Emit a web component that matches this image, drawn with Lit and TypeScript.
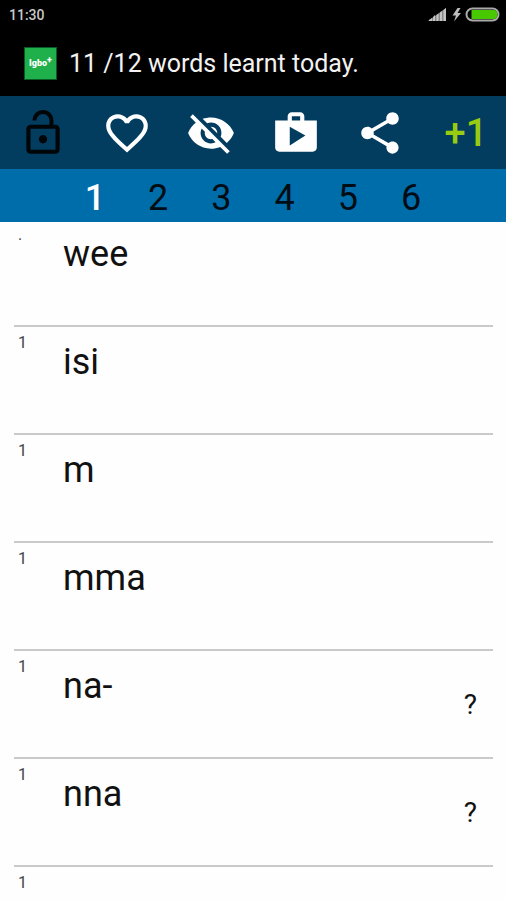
import { LitElement, html, css, svg } from "lit";
import { customElement, state } from "lit/decorators.js";
import { classMap } from "lit/directives/class-map.js";

interface Word {
  mark: string;
  text: string;
  hint?: boolean;
}

const WORDS: Word[] = [
  { mark: ".", text: "wee" },
  { mark: "1", text: "isi" },
  { mark: "1", text: "m" },
  { mark: "1", text: "mma" },
  { mark: "1", text: "na-", hint: true },
  { mark: "1", text: "nna", hint: true },
  { mark: "1", text: "" },
];

const ACTIONS = [
  {
    label: "Unlock",
    dark: true,
    path: "M12 17c1.1 0 2-.9 2-2s-.9-2-2-2-2 .9-2 2 .9 2 2 2zm6-9h-1V6c0-2.76-2.24-5-5-5S7 3.24 7 6h1.9c0-1.71 1.39-3.1 3.1-3.1s3.1 1.39 3.1 3.1v2H6c-1.1 0-2 .9-2 2v10c0 1.1.9 2 2 2h12c1.1 0 2-.9 2-2V10c0-1.1-.9-2-2-2zm0 12H6V10h12v10z",
  },
  {
    label: "Favourites",
    dark: false,
    path: "M16.5 3c-1.74 0-3.41.81-4.5 2.09C10.91 3.81 9.24 3 7.5 3 4.42 3 2 5.42 2 8.5c0 3.78 3.4 6.86 8.55 11.54L12 21.35l1.45-1.32C18.6 15.36 22 12.28 22 8.5 22 5.42 19.58 3 16.5 3zm-4.4 15.55l-.1.1-.1-.1C7.14 14.24 4 11.39 4 8.5 4 6.5 5.5 5 7.5 5c1.54 0 3.04.99 3.57 2.36h1.87C13.46 5.99 14.96 5 16.5 5c2 0 3.5 1.5 3.5 3.5 0 2.89-3.14 5.74-7.9 10.05z",
  },
  {
    label: "Hide translations",
    dark: false,
    path: "M12 7c2.76 0 5 2.24 5 5 0 .65-.13 1.26-.36 1.83l2.92 2.92c1.51-1.26 2.7-2.89 3.43-4.75-1.73-4.39-6-7.5-11-7.5-1.4 0-2.74.25-3.98.7l2.16 2.16C10.74 7.13 11.35 7 12 7zM2 4.27l2.28 2.28.46.46C3.08 8.3 1.78 10.02 1 12c1.73 4.39 6 7.5 11 7.5 1.55 0 3.03-.3 4.38-.84l.42.42L19.73 22 21 20.73 3.27 3 2 4.27zM7.53 9.8l1.55 1.55c-.05.21-.08.43-.08.65 0 1.66 1.34 3 3 3 .22 0 .44-.03.65-.08l1.55 1.55c-.67.33-1.41.53-2.2.53-2.76 0-5-2.24-5-5 0-.79.2-1.53.53-2.2zm4.31-.78l3.15 3.15.02-.16c0-1.66-1.34-3-3-3l-.17.01z",
  },
  {
    label: "Store",
    dark: false,
    path: "M16 6V4c0-1.11-.89-2-2-2h-4c-1.11 0-2 .89-2 2v2H2v13c0 1.11.89 2 2 2h16c1.11 0 2-.89 2-2V6h-6zm-6-2h4v2h-4V4zM9 18V9l7.5 4.2L9 18z",
  },
  {
    label: "Share",
    dark: false,
    path: "M18 16.08c-.76 0-1.44.3-1.96.77L8.91 12.7c.05-.23.09-.46.09-.7s-.04-.47-.09-.7l7.05-4.11c.54.5 1.25.81 2.04.81 1.66 0 3-1.34 3-3s-1.34-3-3-3-3 1.34-3 3c0 .24.04.47.09.7L8.04 9.81C7.5 9.31 6.79 9 6 9c-1.66 0-3 1.34-3 3s1.34 3 3 3c.79 0 1.5-.31 2.04-.81l7.12 4.16c-.05.21-.08.43-.08.65 0 1.61 1.31 2.92 2.92 2.92s2.92-1.31 2.92-2.92-1.31-2.92-2.92-2.92z",
  },
];

@customElement("app-root")
export class AppRoot extends LitElement {
  @state() private page = 1;

  static styles = css`
    :host {
      display: flex;
      flex-direction: column;
      height: 100vh;
      overflow: hidden;
      background: #fefefe;
      color: #111;
      font-family: Roboto, "Liberation Sans", sans-serif;
    }
    button {
      margin: 0;
      padding: 0;
      border: 0;
      background: none;
      font: inherit;
      color: inherit;
      cursor: pointer;
    }
    svg {
      display: block;
    }
    .system {
      flex: none;
      background: #000;
      color: #f2f2f2;
    }
    .status {
      display: flex;
      align-items: center;
      justify-content: space-between;
      height: 30px;
      padding: 0 6px 0 9px;
    }
    .time {
      font-size: 14px;
      font-weight: 500;
      color: #c8c8c8;
    }
    .notice {
      display: flex;
      align-items: center;
      gap: 12px;
      height: 66px;
      padding: 0 24px;
    }
    .badge {
      display: flex;
      align-items: center;
      justify-content: center;
      box-sizing: border-box;
      width: 33px;
      height: 33px;
      border: 1px solid #0b5a26;
      background: #20b04b;
      color: #fff;
      font-size: 9px;
      font-weight: 900;
    }
    .badge sup {
      font-size: 9px;
      line-height: 1;
      padding-bottom: 6px;
    }
    .message {
      margin: 0;
      font-size: 25px;
      font-weight: 400;
      white-space: nowrap;
    }
    .toolbar {
      flex: none;
      display: flex;
      height: 73px;
      padding-left: 1px;
      background: #023d60;
    }
    .action {
      flex: 1 1 0;
      display: flex;
      align-items: center;
      justify-content: center;
      color: #fff;
    }
    .action.dark {
      color: #000508;
    }
    .action.plus {
      color: #9c1;
      font-size: 38px;
      font-weight: 500;
    }
    .action.plus span {
      padding-left: 4px;
    }
    .icon {
      width: 50px;
      height: 50px;
      fill: currentColor;
    }
    .pages {
      flex: none;
      display: flex;
      height: 53px;
      padding: 0 12.5%;
      background: #006dab;
    }
    .page {
      flex: 1;
      padding-top: 4px;
      font-size: 36px;
      color: #000c14;
    }
    .page.current {
      color: #fff;
      font-weight: 500;
    }
    .words {
      flex: 1;
      min-height: 0;
      margin: -3px 0 0;
      padding: 0 13px 0 14px;
      overflow-y: auto;
      scrollbar-width: none;
      list-style: none;
    }
    .word {
      display: flex;
      box-sizing: border-box;
      height: 108px;
      border-bottom: 2px solid #cacaca;
    }
    .mark {
      width: 49px;
      box-sizing: border-box;
      padding: 6px 0 0 4px;
      font-size: 16px;
      line-height: 20px;
      color: #444;
    }
    .text {
      flex: 1;
      padding-top: 14px;
      font-size: 36px;
      line-height: 42px;
    }
    .hint {
      align-self: flex-end;
      padding: 0 16px 34px;
      font-size: 28px;
      line-height: 36px;
    }
  `;

  render() {
    return html`
      <header class="system">
        <div class="status">
          <span class="time">11:30</span>
          <svg width="72" height="16" viewBox="0 0 72 16" role="img" aria-label="Signal, charging">
            <path d="M0 14L18 1v13z" fill="#888" />
            <path d="M1 14v-1l3-2v3zM5 14v-4l2-2v6zM8.500 14V8l2-1.500V14zM12 14V5.500l2-1.500v10zM15.500 14V3L18 1v13z" fill="#c4c4c4" />
            <path d="M29.500 1l-5 7.500h3.500l-2 6 7-8.500h-3.500l3-5z" fill="#bdbdbd" />
            <rect x="38.500" y="1.500" width="32" height="12" rx="6" fill="#000" stroke="#aaa" stroke-width="2" />
            <path d="M43.500 3H65.500a4 4.500 0 0 1 0 9H43.500z" fill="#48c800" />
          </svg>
        </div>
        <div class="notice">
          <span class="badge">Igbo<sup>+</sup></span>
          <h1 class="message">11 /12 words learnt today.</h1>
        </div>
      </header>
      <div class="toolbar" role="toolbar" aria-label="Actions">
        ${ACTIONS.map(
          (a) => html`
            <button class=${classMap({ action: true, dark: a.dark })} aria-label=${a.label}>
              <svg class="icon" viewBox="0 0 24 24" aria-hidden="true">${svg`<path d=${a.path} />`}</svg>
            </button>
          `
        )}
        <button class="action plus"><span>+1</span></button>
      </div>
      <nav class="pages" aria-label="Pages">
        ${[1, 2, 3, 4, 5, 6].map(
          (n) => html`<button
            class=${classMap({ page: true, current: n === this.page })}
            @click=${() => (this.page = n)}
          >${n}</button>`
        )}
      </nav>
      <ul class="words">
        ${WORDS.map(
          (w) => html`
            <li class="word">
              <span class="mark">${w.mark}</span>
              <span class="text">${w.text}</span>
              ${w.hint ? html`<button class="hint">?</button>` : ""}
            </li>
          `
        )}
      </ul>
    `;
  }
}
